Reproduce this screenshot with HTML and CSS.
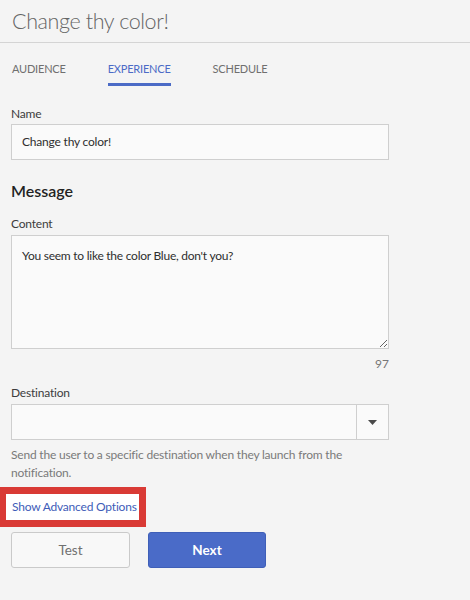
FILE: index.html
```html
<!DOCTYPE html>
<html>
<head>
<meta charset="utf-8">
<link rel="stylesheet" href="styles.css">
</head>
<body>
<header class="header">
  <h1 class="title">Change thy color!</h1>
</header>
<nav class="tabs">
  <span class="tab">Audience</span>
  <span class="tab tab-active">Experience</span>
  <span class="tab">Schedule</span>
</nav>
<main class="form">
  <label class="label label-name">Name</label>
  <div class="input">Change thy color!</div>

  <h2 class="section">Message</h2>

  <label class="label label-content">Content</label>
  <textarea class="textarea">You seem to like the color Blue, don't you?</textarea>
  <div class="counter">97</div>

  <label class="label label-dest">Destination</label>
  <div class="select">
    <div class="select-value"></div>
    <div class="select-btn">
      <svg width="9" height="5" viewBox="0 0 9 5"><path d="M0 0H9L4.5 5Z" fill="#4a4a4a"/></svg>
    </div>
  </div>
  <p class="help">Send the user to a specific destination when they launch from the notification.</p>

  <a class="advanced" href="#">Show Advanced Options</a>

  <div class="actions">
    <button class="btn btn-test">Test</button>
    <button class="btn btn-next">Next</button>
  </div>
</main>
</body>
</html>
```

FILE: styles.css
```css
* { box-sizing: border-box; }
html, body {
  margin: 0;
  padding: 0;
  background: #f4f4f4;
  font-family: Lato, "Open Sans", sans-serif;
  color: #333;
}
.header {
  height: 43px;
  border-bottom: 1px solid #d4d4d4;
  padding: 0 12px;
  display: flex;
  align-items: center;
}
.title {
  margin: 0;
  font-size: 21.5px;
  font-weight: 300;
  letter-spacing: -0.4px;
  color: #646464;
  line-height: 30px;
  padding-bottom: 1px;
}
.tabs {
  display: flex;
  gap: 42px;
  padding: 0 12px;
}
.tab {
  text-transform: uppercase;
  font-size: 11px;
  letter-spacing: -0.2px;
  line-height: 16px;
  color: #6f6f6f;
  padding-top: 18px;
  padding-bottom: 6px;
  border-bottom: 3px solid transparent;
}
.tab-active {
  color: #4b6bc6;
  border-bottom-color: #4b6bc6;
}
.form {
  padding: 0 11px;
  width: 400px;
}
.label {
  display: block;
  font-size: 12px;
  letter-spacing: -0.2px;
  line-height: 16px;
  color: #3c3c3c;
}
.label-name { margin-top: 20px; margin-bottom: 2px; }
.label-content { margin-top: 15px; margin-bottom: 3px; }
.label-dest { margin-top: 13px; margin-bottom: 3px; }
.input {
  width: 378px;
  height: 36px;
  border: 1px solid #cfcfcf;
  background: #fafafa;
  padding: 0 10px;
  font-size: 12px;
  letter-spacing: -0.2px;
  line-height: 34px;
  color: #2e2e2e;
}
.section {
  margin: 21px 0 0;
  font-size: 16px;
  font-weight: 600;
  line-height: 20px;
  color: #222;
}
.textarea {
  display: block;
  width: 378px;
  height: 114px;
  margin: 0;
  border: 1px solid #cfcfcf;
  background: #fafafa;
  padding: 12px 10px;
  font-family: Lato, "Open Sans", sans-serif;
  font-size: 12px;
  letter-spacing: -0.25px;
  line-height: 16px;
  color: #2e2e2e;
  resize: both;
}
.counter {
  width: 378px;
  text-align: right;
  margin-top: 7px;
  font-size: 12px;
  line-height: 16px;
  color: #777;
}
.select {
  display: flex;
  width: 378px;
  height: 36px;
  border: 1px solid #cfcfcf;
  background: #fafafa;
}
.select-value { flex: 1; }
.select-btn {
  width: 32px;
  border-left: 1px solid #cfcfcf;
  display: flex;
  align-items: center;
  justify-content: center;
}
.help {
  margin: 6px 0 0;
  width: 378px;
  font-size: 12px;
  letter-spacing: -0.2px;
  line-height: 18px;
  color: #7a7a7a;
}
.advanced {
  display: block;
  width: 146px;
  margin: 5px 0 0 -11px;
  border: 7px solid #d93a35;
  border-left-width: 6px;
  background: #fff;
  padding: 0 0 0 6px;
  font-size: 12px;
  letter-spacing: -0.2px;
  line-height: 26px;
  color: #3e5cb8;
  text-decoration: none;
  white-space: nowrap;
}
.actions {
  display: flex;
  gap: 18px;
  margin-top: 5px;
}
.btn {
  height: 36px;
  border-radius: 3px;
  font-family: Lato, "Open Sans", sans-serif;
  font-size: 13.5px;
  padding: 0;
}
.btn-test {
  width: 119px;
  background: #f8f8f8;
  border: 1px solid #cacaca;
  color: #707070;
}
.btn-next {
  width: 118px;
  background: #4a6bc8;
  border: 1px solid #3f5fb8;
  color: #fff;
  font-weight: 700;
}
```
